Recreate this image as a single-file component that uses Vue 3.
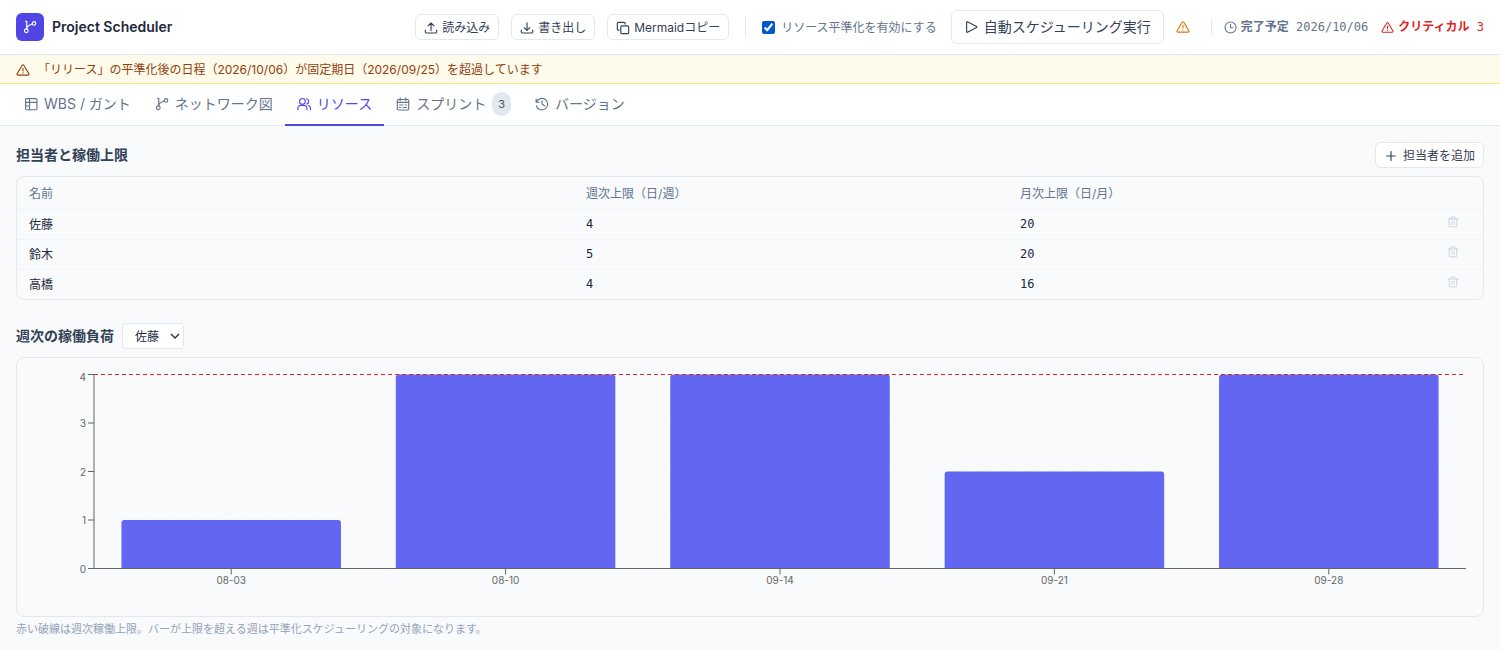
<script setup>
import { ref } from 'vue'

const icons = {
  branch: '<path d="M3 1.500h1.300v8.700"/><circle cx="3.800" cy="12.300" r="2.100"/><circle cx="12.600" cy="3.900" r="2"/><path d="M4.300 9C4.800 6.300 7.600 6 10.600 4.600"/>',
  upload: '<path d="M1.500 10.500v2.200a1 1 0 0 0 1 1h11a1 1 0 0 0 1-1v-2.200M8 11V2.500M4.800 5.400 8 2.200l3.200 3.200"/>',
  download: '<path d="M1.500 10.500v2.200a1 1 0 0 0 1 1h11a1 1 0 0 0 1-1v-2.200M8 2v8.500M4.800 7.500 8 10.700l3.200-3.200"/>',
  copy: '<rect x="5.500" y="5.500" width="9" height="9" rx="1.500"/><path d="M3.500 10.500H3A1.500 1.500 0 0 1 1.500 9V3A1.500 1.500 0 0 1 3 1.500h6A1.500 1.500 0 0 1 10.500 3v.500"/>',
  play: '<path d="M3 2.500v11a.6.6 0 0 0 .9.5l10.500-5.500a.6.6 0 0 0 0-1l-10.500-5.500a.6.6 0 0 0-.9.500z"/>',
  warn: '<path d="M7.100 2.500 1.300 12.300a1 1 0 0 0 .900 1.500h11.600a1 1 0 0 0 .900-1.500L8.900 2.500a1 1 0 0 0-1.800 0z"/><path d="M8 6.200v3M8 11.100v.400"/>',
  clock: '<circle cx="8" cy="8" r="6.800"/><path d="M8 4v4.200h3"/>',
  table: '<rect x="1.800" y="1.800" width="13" height="12.800" rx="1.200"/><path d="M1.800 6.200h13M6.300 1.800v12.800M1.800 10.300h4.500"/>',
  users: '<circle cx="6.200" cy="5" r="3.300"/><path d="M1 14.500V13a3.500 3.500 0 0 1 3.500-3.500h3.400a3.500 3.500 0 0 1 3.500 3.500v1.500M11.200 1.900a3.300 3.300 0 0 1 0 6.200M13 9.700a3.500 3.500 0 0 1 2.400 3.300v1.500"/>',
  calendar: '<rect x="1.500" y="2.800" width="13" height="12" rx="1.200"/><path d="M1.500 6.200h13M4.800 1v3.200M11.200 1v3.200M4 9.200h4M10.500 9.200H12M4 12h1.500M8 12h4"/>',
  history: '<path d="M1.300 2.500V6h3.500M1.600 6a6.600 6.600 0 1 1-.100 4M8 4.500V8l3 2"/>',
  plus: '<path d="M8 3v10M3 8h10"/>',
  trash: '<path d="M1.200 4h13.600M3 4v9.500a1 1 0 0 0 1 1h8a1 1 0 0 0 1-1V4M5.200 4V2.200a.8.8 0 0 1 .8-.8h4a.8.8 0 0 1 .8.8V4M6.500 7v4.500M9.500 7v4.500"/>'
}

const tabs = [
  { id: 'wbs', label: 'WBS / ガント', icon: 'table' },
  { id: 'network', label: 'ネットワーク図', icon: 'branch' },
  { id: 'resource', label: 'リソース', icon: 'users' },
  { id: 'sprint', label: 'スプリント', icon: 'calendar', count: 3 },
  { id: 'version', label: 'バージョン', icon: 'history' }
]
const activeTab = ref('resource')
const leveling = ref(true)

const members = [
  { name: '佐藤', weekly: 4, monthly: 20 },
  { name: '鈴木', weekly: 5, monthly: 20 },
  { name: '高橋', weekly: 4, monthly: 16 }
]
const selected = ref('佐藤')

const weeks = [
  { label: '08-03', load: 1 },
  { label: '08-10', load: 4 },
  { label: '09-14', load: 4 },
  { label: '09-21', load: 2 },
  { label: '09-28', load: 4 }
]
const plotHeight = 194
const maxLoad = 4
const band = 100 / weeks.length
const yOf = (v) => 0.5 + plotHeight * (1 - v / maxLoad)
const center = (i) => `${band * (i + 0.5)}%`
</script>

<template>
  <div class="app">
    <header class="header">
      <div class="logo"><svg class="icon" viewBox="0 0 16 16" v-html="icons.branch" /></div>
      <h1>Project Scheduler</h1>
      <div class="actions">
        <button class="btn"><svg class="icon" viewBox="0 0 16 16" v-html="icons.upload" />読み込み</button>
        <button class="btn"><svg class="icon" viewBox="0 0 16 16" v-html="icons.download" />書き出し</button>
        <button class="btn"><svg class="icon" viewBox="0 0 16 16" v-html="icons.copy" />Mermaidコピー</button>
        <span class="divider" />
        <label class="check"><input v-model="leveling" type="checkbox" />リソース平準化を有効にする</label>
        <button class="btn run"><svg class="icon" viewBox="0 0 16 16" v-html="icons.play" />自動スケジューリング実行</button>
        <svg class="icon amber" viewBox="0 0 16 16" v-html="icons.warn" />
        <div class="status">
          <span class="stat"><svg class="icon" viewBox="0 0 16 16" v-html="icons.clock" /><span><b>完了予定</b> 2026/10/06</span></span>
          <span class="stat critical"><svg class="icon" viewBox="0 0 16 16" v-html="icons.warn" /><span><b>クリティカル</b> 3</span></span>
        </div>
      </div>
    </header>

    <div class="alert" role="alert">
      <svg class="icon" viewBox="0 0 16 16" v-html="icons.warn" />
      <span>「リリース」の平準化後の日程（2026/10/06）が固定期日（2026/09/25）を超過しています</span>
    </div>

    <nav class="tabs">
      <button
        v-for="t in tabs"
        :key="t.id"
        class="tab"
        :class="{ active: activeTab === t.id }"
        @click="activeTab = t.id"
      >
        <svg class="icon" viewBox="0 0 16 16" v-html="icons[t.icon]" />
        {{ t.label }}
        <span v-if="t.count" class="count">{{ t.count }}</span>
      </button>
    </nav>

    <main>
      <div class="section-head">
        <h2>担当者と稼働上限</h2>
        <button class="btn add"><svg class="icon" viewBox="0 0 16 16" v-html="icons.plus" />担当者を追加</button>
      </div>
      <div class="card">
        <table>
          <colgroup>
            <col class="c-name" />
            <col class="c-limit" />
            <col class="c-limit" />
            <col />
          </colgroup>
          <thead>
            <tr><th>名前</th><th>週次上限（日/週）</th><th>月次上限（日/月）</th><th></th></tr>
          </thead>
          <tbody>
            <tr v-for="m in members" :key="m.name">
              <td>{{ m.name }}</td>
              <td class="num">{{ m.weekly }}</td>
              <td class="num">{{ m.monthly }}</td>
              <td class="del">
                <button :aria-label="m.name + 'を削除'"><svg class="icon" viewBox="0 0 16 16" v-html="icons.trash" /></button>
              </td>
            </tr>
          </tbody>
        </table>
      </div>

      <div class="section-head load">
        <h2><label for="member">週次の稼働負荷</label></h2>
        <div class="select">
          <select id="member" v-model="selected">
            <option v-for="m in members" :key="m.name">{{ m.name }}</option>
          </select>
          <svg class="chevron" viewBox="0 0 10 10"><path d="M1 3l4 4 4-4" /></svg>
        </div>
      </div>
      <div class="card chart">
        <svg class="plot" width="100%" height="195">
          <g class="grid">
            <line v-for="v in 3" :key="'h' + v" x1="0" x2="100%" :y1="yOf(v)" :y2="yOf(v)" />
            <line v-for="(w, i) in weeks" :key="'v' + i" :x1="center(i)" :x2="center(i)" :y1="yOf(4)" :y2="yOf(0)" />
            <line x1="100%" x2="100%" :y1="yOf(4)" :y2="yOf(0)" />
          </g>
          <svg class="bars" width="100%" :height="yOf(0)">
            <rect
              v-for="(w, i) in weeks"
              :key="w.label"
              :x="band * (i + 0.1) + '%'"
              :y="yOf(w.load)"
              :width="band * 0.8 + '%'"
              :height="plotHeight + 6"
              rx="3"
            />
          </svg>
          <g class="axis">
            <line x1="0" x2="100%" :y1="yOf(0)" :y2="yOf(0)" />
            <line x1="0" x2="0" :y1="yOf(4)" :y2="yOf(0)" />
            <line v-for="(w, i) in weeks" :key="'t' + i" :x1="center(i)" :x2="center(i)" :y1="yOf(0)" :y2="yOf(0) + 6" />
            <line v-for="v in 5" :key="'y' + v" x1="-6" x2="0" :y1="yOf(v - 1)" :y2="yOf(v - 1)" />
          </g>
          <g class="labels">
            <text v-for="(w, i) in weeks" :key="w.label" :x="center(i)" :y="yOf(0) + 15" text-anchor="middle">{{ w.label }}</text>
            <text v-for="v in 5" :key="v" x="-8" :y="v === 5 ? 7 : yOf(v - 1) + 4" text-anchor="end">{{ v - 1 }}</text>
          </g>
          <line class="limit" x1="0" x2="100%" :y1="yOf(4)" :y2="yOf(4)" />
        </svg>
      </div>
      <p class="note">赤い破線は週次稼働上限。バーが上限を超える週は平準化スケジューリングの対象になります。</p>
    </main>
  </div>
</template>

<style>
body {
  margin: 0;
  background: #f8fafc;
}
</style>

<style scoped>
.app {
  font-family: Inter, "Noto Sans CJK JP", sans-serif;
  font-size: 12px;
  line-height: 17px;
  color: #1e293b;
  min-height: 100vh;
  background: #f8fafc;
}
.app * {
  box-sizing: border-box;
}
button,
select {
  font: inherit;
  color: inherit;
}
button {
  cursor: pointer;
}
h1,
h2,
p {
  margin: 0;
}
.icon {
  flex: none;
  width: 14px;
  height: 14px;
  fill: none;
  stroke: currentColor;
  stroke-width: 1.3;
  stroke-linecap: round;
  stroke-linejoin: round;
}
.header {
  display: flex;
  align-items: center;
  height: 55px;
  padding: 0 16px;
  background: #fff;
  border-bottom: 1px solid #e2e8f0;
}
.logo {
  display: flex;
  align-items: center;
  justify-content: center;
  width: 28px;
  height: 28px;
  margin-right: 8px;
  border-radius: 6px;
  background: #4f46e5;
  color: #fff;
}
h1 {
  font-size: 14px;
  line-height: 20px;
  font-weight: 600;
}
.actions {
  display: flex;
  align-items: center;
  gap: 12px;
  margin-left: auto;
  white-space: nowrap;
}
.btn {
  display: flex;
  align-items: center;
  gap: 4px;
  height: 26px;
  padding: 1px 8px 0;
  border: 1px solid #e2e8f0;
  border-radius: 6px;
  background: #fff;
  color: #334155;
}
.divider {
  width: 1px;
  height: 20px;
  margin: 0 4px;
  background: #e2e8f0;
}
.check {
  display: flex;
  align-items: center;
  gap: 6px;
  margin-right: 2px;
  color: #64748b;
}
.check input {
  width: 13px;
  height: 13px;
  margin: 0;
  accent-color: #0058d0;
}
.run {
  height: 34px;
  padding: 0 12px;
  gap: 6px;
  font-size: 14px;
  line-height: 20px;
}
.amber {
  color: #d97706;
}
.status {
  display: flex;
  align-items: center;
  gap: 13px;
  height: 16px;
  margin-left: 9px;
  padding-left: 12px;
  border-left: 1px solid #e2e8f0;
  font-family: "DejaVu Sans Mono", "Noto Sans CJK JP", monospace;
  font-weight: 500;
  color: #64748b;
}
.stat {
  display: flex;
  align-items: center;
  gap: 4px;
}
.stat .icon {
  width: 13px;
  height: 13px;
}
.critical {
  color: #dc2626;
}
.alert {
  display: flex;
  align-items: center;
  gap: 8px;
  height: 29px;
  padding: 1px 16px 0;
  background: #fffbeb;
  border-bottom: 1px solid #fde68a;
  color: #92400e;
}
.tabs {
  display: flex;
  height: 42px;
  padding: 0 12px;
  background: #fff;
  border-bottom: 1px solid #e2e8f0;
}
.tab {
  display: flex;
  align-items: center;
  gap: 6px;
  height: 42px;
  padding: 0 12px;
  border: 0;
  border-bottom: 2px solid transparent;
  background: none;
  font-size: 14px;
  line-height: 20px;
  color: #64748b;
}
.tab.active {
  border-color: #4f46e5;
  color: #4f46e5;
}
.count {
  padding: 0 6px;
  border-radius: 12px;
  background: #e2e8f0;
  color: #475569;
  font-size: 11px;
  line-height: 24px;
}
main {
  padding: 16px;
}
.section-head {
  display: flex;
  align-items: center;
  justify-content: space-between;
  margin-bottom: 8px;
}
.section-head.load {
  justify-content: flex-start;
  gap: 8px;
  margin-top: 23px;
}
.add {
  gap: 5px;
}
h2 {
  font-size: 14px;
  line-height: 20px;
  font-weight: 600;
  color: #334155;
}
.card {
  border: 1px solid #e2e8f0;
  border-radius: 8px;
}
table {
  width: 100%;
  table-layout: fixed;
  border-collapse: collapse;
}
.c-name {
  width: 38%;
}
.c-limit {
  width: 29.6%;
}
th {
  height: 32px;
  padding: 1px 12px 0;
  text-align: left;
  font-weight: 400;
  color: #64748b;
}
td {
  height: 30px;
  padding: 1px 12px 0;
}
tbody tr {
  border-top: 1px solid #f1f5f9;
}
.num {
  font-family: "DejaVu Sans Mono", monospace;
}
.del {
  padding: 0 5px 4px;
}
.del button {
  display: flex;
  padding: 0;
  border: 0;
  background: none;
  color: #cbd5e1;
}
.del .icon {
  width: 12px;
  height: 12px;
}
.select {
  position: relative;
}
select {
  appearance: none;
  display: block;
  width: 62px;
  height: 26px;
  padding: 0 12px;
  border: 1px solid #e2e8f0;
  border-radius: 4px;
  background: #fff;
}
.chevron {
  position: absolute;
  right: 4px;
  top: 8px;
  width: 10px;
  height: 10px;
  fill: none;
  stroke: #1e293b;
  stroke-width: 1.3;
  pointer-events: none;
}
.chart {
  padding: 16px 17px 47px 77px;
}
.plot {
  display: block;
  overflow: visible;
}
.grid line {
  stroke: #f1f5f9;
  stroke-dasharray: 3 3;
}
.bars {
  overflow: hidden;
  fill: #6366f1;
}
.axis line {
  stroke: #666;
}
.labels {
  font-size: 10px;
  fill: #666;
}
.limit {
  stroke: #dc2626;
  stroke-dasharray: 4 3;
}
.note {
  margin-top: 4px;
  font-size: 11px;
  color: #94a3b8;
}
</style>
